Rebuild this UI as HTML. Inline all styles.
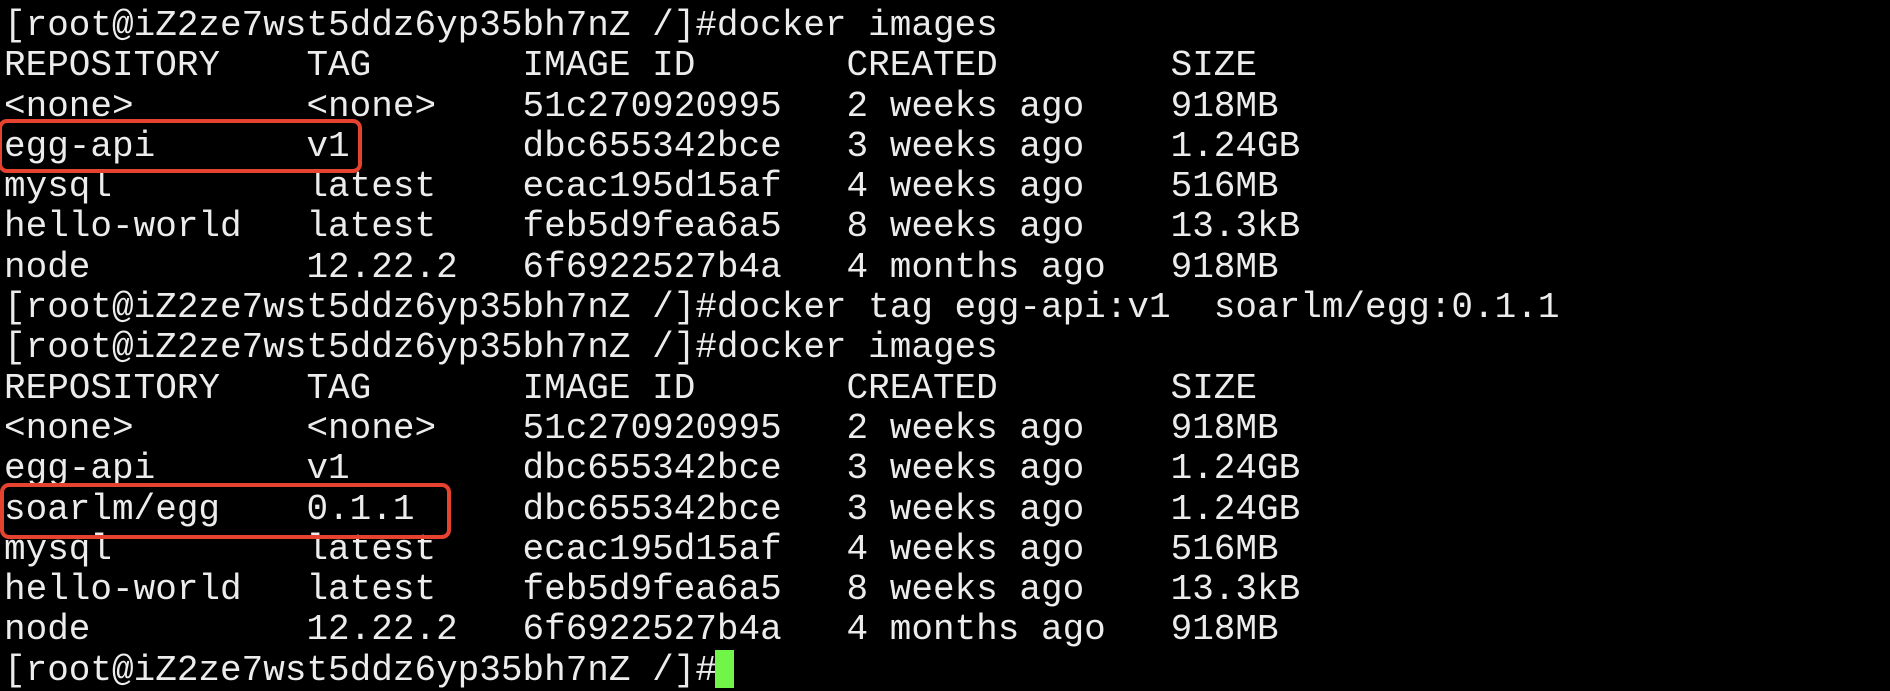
<!DOCTYPE html>
<html><head><meta charset="utf-8"><style>
html,body{margin:0;padding:0;background:#000;width:1890px;height:688px;overflow:hidden}
pre{position:absolute;left:4px;top:6px;margin:0;font-family:"Liberation Mono","DejaVu Sans Mono",monospace;font-size:36px;line-height:40.3px;color:#ececec;white-space:pre}
.box{position:absolute;border:4px solid #e5432f;border-radius:9px;box-sizing:border-box}
.cur{position:absolute;left:715px;top:650px;width:19px;height:38px;background:#72f549}
</style></head><body>
<pre>[root@iZ2ze7wst5ddz6yp35bh7nZ /]#docker images
REPOSITORY    TAG       IMAGE ID       CREATED        SIZE
&lt;none&gt;        &lt;none&gt;    51c270920995   2 weeks ago    918MB
egg-api       v1        dbc655342bce   3 weeks ago    1.24GB
mysql         latest    ecac195d15af   4 weeks ago    516MB
hello-world   latest    feb5d9fea6a5   8 weeks ago    13.3kB
node          12.22.2   6f6922527b4a   4 months ago   918MB
[root@iZ2ze7wst5ddz6yp35bh7nZ /]#docker tag egg-api:v1  soarlm/egg:0.1.1
[root@iZ2ze7wst5ddz6yp35bh7nZ /]#docker images
REPOSITORY    TAG       IMAGE ID       CREATED        SIZE
&lt;none&gt;        &lt;none&gt;    51c270920995   2 weeks ago    918MB
egg-api       v1        dbc655342bce   3 weeks ago    1.24GB
soarlm/egg    0.1.1     dbc655342bce   3 weeks ago    1.24GB
mysql         latest    ecac195d15af   4 weeks ago    516MB
hello-world   latest    feb5d9fea6a5   8 weeks ago    13.3kB
node          12.22.2   6f6922527b4a   4 months ago   918MB
[root@iZ2ze7wst5ddz6yp35bh7nZ /]#</pre>
<div class="box" style="left:-2px;top:119px;width:364px;height:54px"></div>
<div class="box" style="left:0px;top:483px;width:451px;height:56px"></div>
<div class="cur"></div>
</body></html>
